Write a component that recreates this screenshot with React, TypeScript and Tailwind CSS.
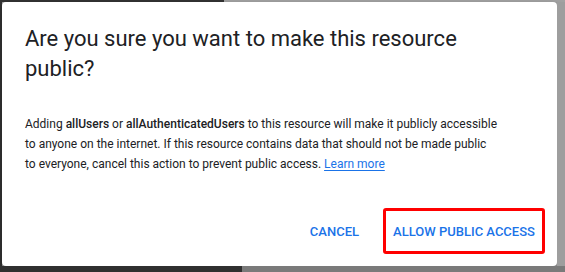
export default function App() {
  return (
    <div className="flex h-[272px] w-[565px] flex-col overflow-hidden bg-[#9e9e9e] font-['Roboto',sans-serif]">
      <div className="flex h-[2px] shrink-0">
        <div className="w-[224px] bg-[#333333]" />
        <div className="flex-1 bg-[#a3a3a3]" />
      </div>
      <div className="flex h-[264px] shrink-0">
        <div className="w-[2px] bg-[#333333]" />
        <div className="flex w-[555px] flex-col rounded-[4px] bg-white pl-[23px] pr-[12px] shadow-[0_4px_8px_rgba(0,0,0,0.35)]">
          <h2 className="mt-[22px] pr-[60px] text-[22px] leading-[30px] text-[#202124]">
            Are you sure you want to make this resource public?
          </h2>
          <p className="mt-[30px] w-[510px] text-[12px] leading-[20px] text-[#202124]">
            Adding <b className="font-medium">allUsers</b> or{" "}
            <b className="font-medium">allAuthenticatedUsers</b> to this resource will make it
            publicly accessible
            <br />
            to anyone on the internet. If this resource contains data that should not be made
            public
            <br />
            to everyone, cancel this action to prevent public access.{" "}
            <a className="text-[#1a73e8] underline underline-offset-2">Learn more</a>
          </p>
          <div className="mt-auto mb-[12px] flex items-center justify-end gap-[24px]">
            <button className="pt-[2px] text-[13px] font-medium text-[#1a73e8]">CANCEL</button>
            <div className="flex h-[46px] w-[162px] items-center justify-center rounded-[3px] border-[3px] border-[#ff0000] pt-[2px]">
              <button className="text-[13px] font-medium text-[#1a73e8]">ALLOW PUBLIC ACCESS</button>
            </div>
          </div>
        </div>
        <div className="flex-1 bg-[#9e9e9e]" />
      </div>
      <div className="flex flex-1">
        <div className="w-[242px] bg-[#303030]" />
        <div className="flex-1 bg-[#7a7a7a]" />
      </div>
    </div>
  );
}
